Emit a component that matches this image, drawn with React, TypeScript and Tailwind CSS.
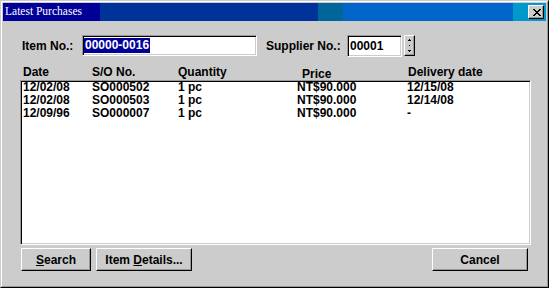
import React from 'react';

const raised =
  'border border-t-white border-l-white border-r-black border-b-black shadow-[inset_-1px_-1px_0_#999999] bg-[#cccccc]';
const sunken =
  'border border-t-[#999999] border-l-[#999999] border-r-white border-b-white shadow-[inset_1px_1px_0_#000000,inset_-1px_-1px_0_#cccccc] bg-white';

const rows = [
  { date: '12/02/08', so: 'SO000502', qty: '1 pc', price: 'NT$90.000', delivery: '12/15/08' },
  { date: '12/02/08', so: 'SO000503', qty: '1 pc', price: 'NT$90.000', delivery: '12/14/08' },
  { date: '12/09/96', so: 'SO000007', qty: '1 pc', price: 'NT$90.000', delivery: '-' },
];

const CloseGlyph = () => (
  <svg width="8" height="7" viewBox="0 0 8 7" shapeRendering="crispEdges">
    <path fill="#000" d="M0 0h2v1H0zM6 0h2v1H6zM1 1h2v1H1zM5 1h2v1H5zM2 2h4v1H2zM3 3h2v1H3zM2 4h4v1H2zM1 5h2v1H1zM5 5h2v1H5zM0 6h2v1H0zM6 6h2v1H6z" />
  </svg>
);

const SpinGlyph = () => (
  <svg width="5" height="15" viewBox="0 0 5 15" shapeRendering="crispEdges">
    <path fill="#000" d="M2 1h1v1H2zM1 2h3v1H1zM2 7h1v1H2zM1 12h3v1H1zM2 13h1v1H2z" />
  </svg>
);

export default function App() {
  return (
    <div className="w-[549px] h-[288px] bg-[#cccccc] border border-t-[#cccccc] border-l-[#cccccc] border-r-black border-b-black font-['Liberation_Sans',Arial,sans-serif] text-[12px] font-bold text-black">
      <div className="h-full flex flex-col border border-t-white border-l-white border-r-[#999999] border-b-[#999999] p-px">
        {/* title bar */}
        <div className="h-[18px] flex items-center justify-between pl-[2px] pr-[2px] bg-[linear-gradient(to_right,#000099_97px,#003399_97px,#003399_315px,#006699_315px,#006699_340px,#0066cc_340px,#0066cc_510px,#0099cc_510px)]">
          <span className="font-['Liberation_Serif',serif] font-normal text-[11.5px] leading-none text-white">
            Latest Purchases
          </span>
          <button className={`w-[16px] h-[14px] flex items-center justify-center pl-px ${raised}`}>
            <CloseGlyph />
          </button>
        </div>

        <div className="flex-1 flex flex-col pl-[17px] pr-[15px]">
          {/* item / supplier row */}
          <div className="mt-[14px] h-[21px] flex items-center">
            <span className="ml-[2px] w-[60px]">Item No.:</span>
            <div className={`w-[175px] h-[21px] flex items-center pl-[1px] ${sunken}`}>
              <span className="bg-[#000099] text-white leading-[15px] pl-px pr-px">00000-0016</span>
            </div>
            <span className="ml-[9px] w-[81px]">Supplier No.:</span>
            <div className={`w-[55px] h-[22px] flex items-center pl-[2px] ${sunken}`}>
              <span>00001</span>
            </div>
            <div className={`ml-[2px] w-[11px] h-[21px] flex items-center justify-center ${raised}`}>
              <SpinGlyph />
            </div>
          </div>

          {/* column headers */}
          <div className="mt-[10px] h-[12px] leading-[12px] flex pl-[3px]">
            <span className="w-[69px]">Date</span>
            <span className="w-[86px]">S/O No.</span>
            <span className="w-[124px]">Quantity</span>
            <span className="w-[106px] mt-[2px]">Price</span>
            <span>Delivery date</span>
          </div>

          {/* list */}
          <div className={`mt-[2px] h-[165px] pl-[2px] ${sunken}`}>
            {rows.map((r, i) => (
              <div key={i} className="h-[13px] leading-[13px] flex whitespace-nowrap">
                <span className="w-[69px]">{r.date}</span>
                <span className="w-[86px]">{r.so}</span>
                <span className="w-[119px]">{r.qty}</span>
                <span className="w-[110px]">{r.price}</span>
                <span>{r.delivery}</span>
              </div>
            ))}
          </div>

          {/* buttons */}
          <div className="mt-[3px] h-[23px] flex">
            <button className={`ml-[1px] w-[70px] h-[23px] flex items-center justify-center ${raised}`}>
              <span>
                <span className="underline underline-offset-[1px] decoration-1">S</span>earch
              </span>
            </button>
            <button className={`ml-[5px] w-[96px] h-[23px] flex items-center justify-center ${raised}`}>
              <span>
                Item <span className="underline underline-offset-[1px] decoration-1">D</span>etails...
              </span>
            </button>
            <button className={`ml-auto mr-[3px] w-[96px] h-[23px] flex items-center justify-center ${raised}`}>
              Cancel
            </button>
          </div>
        </div>
      </div>
    </div>
  );
}
